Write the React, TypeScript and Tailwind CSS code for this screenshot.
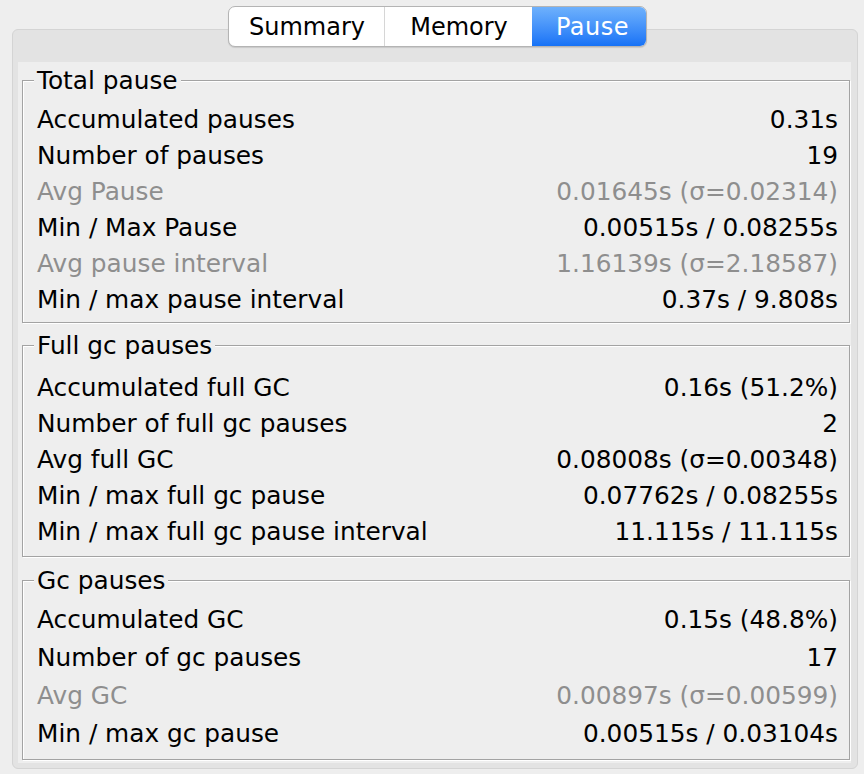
import React from "react"

type Row = { label: string; value: string; dim?: boolean }
type Group = { title: string; rows: Row[]; box: string; gap: string; rowH: string }

const FONT = { fontFamily: '"DejaVu Sans", Verdana, sans-serif' }

const GROUPS: Group[] = [
  {
    title: "Total pause",
    box: "mt-[17px] pb-[4px]",
    gap: "mt-[6px]",
    rowH: "h-[36px]",
    rows: [
      { label: "Accumulated pauses", value: "0.31s" },
      { label: "Number of pauses", value: "19" },
      { label: "Avg Pause", value: "0.01645s (σ=0.02314)", dim: true },
      { label: "Min / Max Pause", value: "0.00515s / 0.08255s" },
      { label: "Avg pause interval", value: "1.16139s (σ=2.18587)", dim: true },
      { label: "Min / max pause interval", value: "0.37s / 9.808s" },
    ],
  },
  {
    title: "Full gc pauses",
    box: "mt-[22px] pb-[6px]",
    gap: "mt-[9px]",
    rowH: "h-[36px]",
    rows: [
      { label: "Accumulated full GC", value: "0.16s (51.2%)" },
      { label: "Number of full gc pauses", value: "2" },
      { label: "Avg full GC", value: "0.08008s (σ=0.00348)" },
      { label: "Min / max full gc pause", value: "0.07762s / 0.08255s" },
      { label: "Min / max full gc pause interval", value: "11.115s / 11.115s" },
    ],
  },
  {
    title: "Gc pauses",
    box: "mt-[23px] pb-[6px]",
    gap: "mt-[5px]",
    rowH: "h-[38px]",
    rows: [
      { label: "Accumulated GC", value: "0.15s (48.8%)" },
      { label: "Number of gc pauses", value: "17" },
      { label: "Avg GC", value: "0.00897s (σ=0.00599)", dim: true },
      { label: "Min / max gc pause", value: "0.00515s / 0.03104s" },
    ],
  },
]

function GroupBox({ g }: { g: Group }) {
  return (
    <div
      className={`border border-[#a3a3a3] pl-[14px] pr-[11px] shadow-[1px_1px_0_#ffffff,inset_1px_1px_0_#ffffff] ${g.box}`}
    >
      {/* title sits on the top border line */}
      <div className="-mt-[15px] flex h-[30px]">
        <span className="-ml-[3px] bg-[#eeeeee] px-[3px] text-[24.8px] leading-[30px] text-black">{g.title}</span>
      </div>
      <div className={g.gap}>
        {g.rows.map((r) => (
          <div
            key={r.label}
            className={`flex items-center justify-between ${g.rowH} text-[24.8px] ${r.dim ? "text-[#8e8e8e]" : "text-black"}`}
          >
            <span>{r.label}</span>
            <span>{r.value}</span>
          </div>
        ))}
      </div>
    </div>
  )
}

export default function App() {
  return (
    <div style={FONT} className="h-[774px] w-[864px] overflow-hidden bg-[#eeeeee] pl-[12px] pr-[6px]">
      <div className="flex flex-col items-center">
        {/* segmented tabs */}
        <div className="relative z-10 ml-[4px] mt-[6px] flex h-[41px] overflow-hidden rounded-[7px] border border-[#b4b4b4] bg-white text-[24px] text-black shadow-[0_1px_1px_rgba(0,0,0,0.12)]">
          <div className="flex w-[156px] items-center justify-center border-r border-[#d6d6d6] pl-[2px]">Summary</div>
          <div className="flex w-[147px] items-center justify-center pl-[2px]">Memory</div>
          <div className="flex w-[114px] items-center justify-center bg-gradient-to-b from-[#6eb1fc] to-[#1572f6] pl-[8px] tracking-[0.5px] text-white">
            Pause
          </div>
        </div>
        {/* pane */}
        <div className="-mt-[18px] w-full rounded-[6px] border border-[#d4d4d4] bg-[#e3e3e3] pb-[5px] pl-[5px] pr-[6px] pt-[32px]">
          <div className="h-[701px] overflow-hidden bg-[#eeeeee] pl-[4px] pr-[1px] pt-px">
            {GROUPS.map((g) => (
              <GroupBox key={g.title} g={g} />
            ))}
          </div>
        </div>
      </div>
    </div>
  )
}
